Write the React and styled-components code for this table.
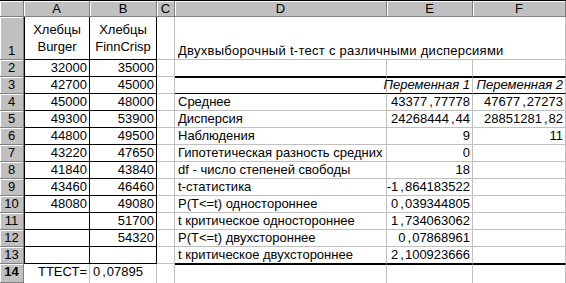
import React from 'react';
import styled, { createGlobalStyle } from 'styled-components';

const GRID = '#c0c0c0';
const INK = '#000';

const Global = createGlobalStyle`
  html, body { margin: 0; padding: 0; background: #fff; }
  body {
    font-family: Arial, "Liberation Sans", sans-serif;
    font-size: 13px;
    color: #000;
  }
`;

const Sheet = styled.div`
  display: grid;
  grid-template-columns: 24px 66px 67px 18px 212px 86px 93px;
  grid-template-rows: 16px 43px repeat(12, 17px) 19px;
  width: 566px;
  height: 283px;
  box-sizing: border-box;
  border-top: 1px solid #000;
  overflow: hidden;
  background: #fff;
`;

const Head = styled.div`
  box-sizing: border-box;
  background: #c0c0c0;
  border-right: 1px solid #808080;
  border-bottom: 1px solid #808080;
  box-shadow: inset 1px 1px 0 #fff;
  display: flex;
  justify-content: center;
  align-items: ${p => (p.$valign === 'bottom' ? 'flex-end' : p.$valign === 'top' ? 'flex-start' : 'center')};
  line-height: 16px;
  font-weight: ${p => (p.$active ? 700 : 400)};
  white-space: nowrap;
`;

const Cell = styled.div`
  box-sizing: border-box;
  min-width: 0;
  display: flex;
  align-items: ${p => (p.$valign === 'center' ? 'center' : p.$valign === 'top' ? 'flex-start' : 'flex-end')};
  justify-content: ${p => (p.$align === 'right' ? 'flex-end' : p.$align === 'center' ? 'center' : 'flex-start')};
  text-align: ${p => p.$align || 'left'};
  padding: 0 ${p => (p.$align === 'right' ? '2px' : '0')} 0 ${p => (p.$align === 'left' ? '3px' : '0')};
  border-right: ${p => (p.$r === 'none' ? 'none' : `1px solid ${p.$r || GRID}`)};
  border-bottom: ${p => (p.$b === 'none' ? 'none' : `1px solid ${p.$b || GRID}`)};
  border-left: ${p => (p.$l ? `1px solid ${p.$l}` : 'none')};
  border-top: ${p => (p.$t ? `1px solid ${p.$t}` : 'none')};
  font-style: ${p => (p.$italic ? 'italic' : 'normal')};
  letter-spacing: ${p => (p.$title ? '0.28px' : 'normal')};
  line-height: ${p => (p.$wrap ? '17px' : '16px')};
  white-space: ${p => (p.$wrap ? 'normal' : 'nowrap')};
`;

const Comma = styled.span`
  margin: 0 1px 0 2px;
`;

const cols = ['A', 'B', 'C', 'D', 'E', 'F'];

const twoLine = (a, b) => (
  <span>
    {a}
    <br />
    {b}
  </span>
);

const num = s => {
  if (!s || !/^-?\d+,\d+$/.test(s)) return s;
  const [a, b] = s.split(',');
  return (
    <span>
      {a}
      <Comma>,</Comma>
      {b}
    </span>
  );
};

const boxed = { $r: INK, $b: INK, $l: null };

const rows = [
  {
    n: 1,
    head: 'bottom',
    cells: [
      { v: twoLine('Хлебцы', 'Burger'), $align: 'center', $valign: 'center', $wrap: true, ...boxed, $l: INK },
      { v: twoLine('Хлебцы', 'FinnCrisp'), $align: 'center', $valign: 'center', $wrap: true, ...boxed },
      {},
      { v: 'Двухвыборочный t-тест с различными дисперсиями', $align: 'left', $r: 'none', $title: true },
      { $r: 'none' },
      {},
    ],
  },
];

const sample = [
  ['32000', '35000', '', '', ''],
  ['42700', '45000', '', 'Переменная 1', 'Переменная 2'],
  ['45000', '48000', 'Среднее', '43377,77778', '47677,27273'],
  ['49300', '53900', 'Дисперсия', '24268444,44', '28851281,82'],
  ['44800', '49500', 'Наблюдения', '9', '11'],
  ['43220', '47650', 'Гипотетическая разность средних', '0', ''],
  ['41840', '43840', 'df - число степеней свободы', '18', ''],
  ['43460', '46460', 't-статистика', '-1,864183522', ''],
  ['48080', '49080', 'P(T<=t) одностороннее', '0,039344805', ''],
  ['', '51700', 't критическое одностороннее', '1,734063062', ''],
  ['', '54320', 'P(T<=t) двухстороннее', '0,07868961', ''],
  ['', '', 't критическое двухстороннее', '2,100923666', ''],
];

sample.forEach((r, i) => {
  const n = i + 2;
  const edge = {};
  if (n === 2) edge.$b = INK;
  if (n === 3) {
    edge.$t = INK;
    edge.$b = INK;
  }
  if (n === 13) edge.$b = INK;
  const italic = n === 3;
  rows.push({
    n,
    cells: [
      { v: r[0], $align: 'right', ...boxed, $l: INK },
      { v: r[1], $align: 'right', ...boxed },
      {},
      { v: r[2], $align: 'left', ...edge },
      { v: num(r[3]), $align: 'right', $italic: italic, ...edge },
      { v: num(r[4]), $align: 'right', $italic: italic, ...edge },
    ],
  });
});

rows.push({
  n: 14,
  head: 'top',
  active: true,
  cells: [
    { v: 'ТТЕСТ=', $align: 'right', $valign: 'top', $b: 'none' },
    { v: num('0,07895'), $align: 'left', $valign: 'top', $b: 'none' },
    { $b: 'none' },
    { $t: INK, $b: 'none' },
    { $t: INK, $b: 'none' },
    { $t: INK, $b: 'none' },
  ],
});

export default function App() {
  return (
    <>
      <Global />
      <Sheet>
        <Head />
        {cols.map(c => (
          <Head key={c}>{c}</Head>
        ))}
        {rows.map(row => (
          <React.Fragment key={row.n}>
            <Head $valign={row.head} $active={row.active}>
              {row.n}
            </Head>
            {row.cells.map(({ v, ...p }, i) => (
              <Cell key={i} {...p}>
                {v}
              </Cell>
            ))}
          </React.Fragment>
        ))}
      </Sheet>
    </>
  );
}
